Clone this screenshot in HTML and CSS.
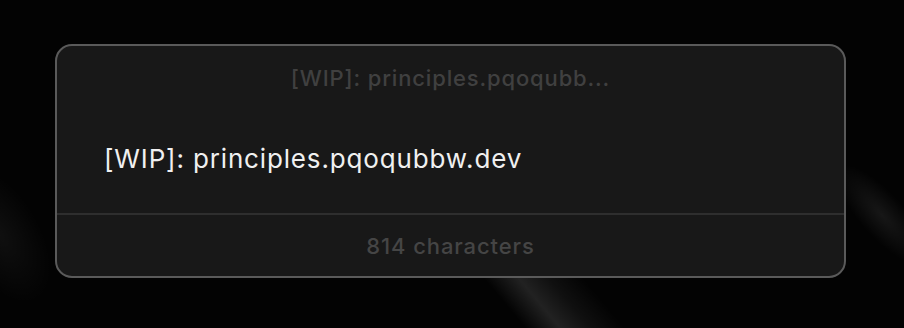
FILE: index.html
```html
<!DOCTYPE html>
<html>
<head>
<meta charset="utf-8">
<link rel="stylesheet" href="styles.css">
</head>
<body>
<div class="stage">
  <div class="streak streak-left"></div>
  <div class="streak streak-bottom"></div>
  <div class="streak streak-right"></div>
  <div class="card">
    <div class="card-head">[WIP]: principles.pqoqubb...</div>
    <div class="card-body">[WIP]: principles.pqoqubbw.dev</div>
    <div class="card-foot">814 characters</div>
  </div>
</div>
</body>
</html>
```
FILE: styles.css
```css
* { box-sizing: border-box; }
html, body { margin: 0; padding: 0; }
body {
  background: #030303;
  font-family: Inter, "Noto Sans", sans-serif;
  width: 904px;
  height: 328px;
  overflow: hidden;
}
.stage {
  position: relative;
  width: 904px;
  height: 328px;
  padding: 44px 0 0 55px;
  overflow: hidden;
}
.streak {
  position: absolute;
  pointer-events: none;
}
.streak-left {
  left: -40px;
  top: 160px;
  width: 80px;
  height: 150px;
  background: radial-gradient(ellipse closest-side, rgba(255,255,255,0.05), rgba(255,255,255,0));
  transform: rotate(-30deg);
}
.streak-bottom {
  left: 470px;
  top: 262px;
  width: 100px;
  height: 70px;
  background: linear-gradient(90deg, rgba(255,255,255,0) 0%, rgba(255,255,255,0.12) 35%, rgba(255,255,255,0.05) 65%, rgba(255,255,255,0) 100%);
  transform: skewX(40deg);
  transform-origin: top left;
}
.streak-right {
  left: 860px;
  top: 150px;
  width: 44px;
  height: 130px;
  background: radial-gradient(ellipse closest-side, rgba(255,255,255,0.08), rgba(255,255,255,0));
  transform: rotate(-42deg);
}
.card {
  position: relative;
  width: 791px;
  height: 234px;
  background: #181818;
  border: 2px solid #5a5a5a;
  border-radius: 17px;
  display: flex;
  flex-direction: column;
  overflow: hidden;
}
.card-head {
  height: 64px;
  display: flex;
  align-items: center;
  justify-content: center;
  color: #404040;
  font-size: 22px;
  font-weight: 500;
  letter-spacing: 0.85px;
}
.card-body {
  flex: 1;
  padding: 33px 0 0 47px;
  color: #f0f0f0;
  font-size: 26px;
  letter-spacing: 0.85px;
  border-bottom: 2px solid #2e2e2e;
}
.card-foot {
  height: 61px;
  display: flex;
  align-items: center;
  justify-content: center;
  color: #454545;
  font-size: 22px;
  font-weight: 500;
  letter-spacing: 0.9px;
}
```
